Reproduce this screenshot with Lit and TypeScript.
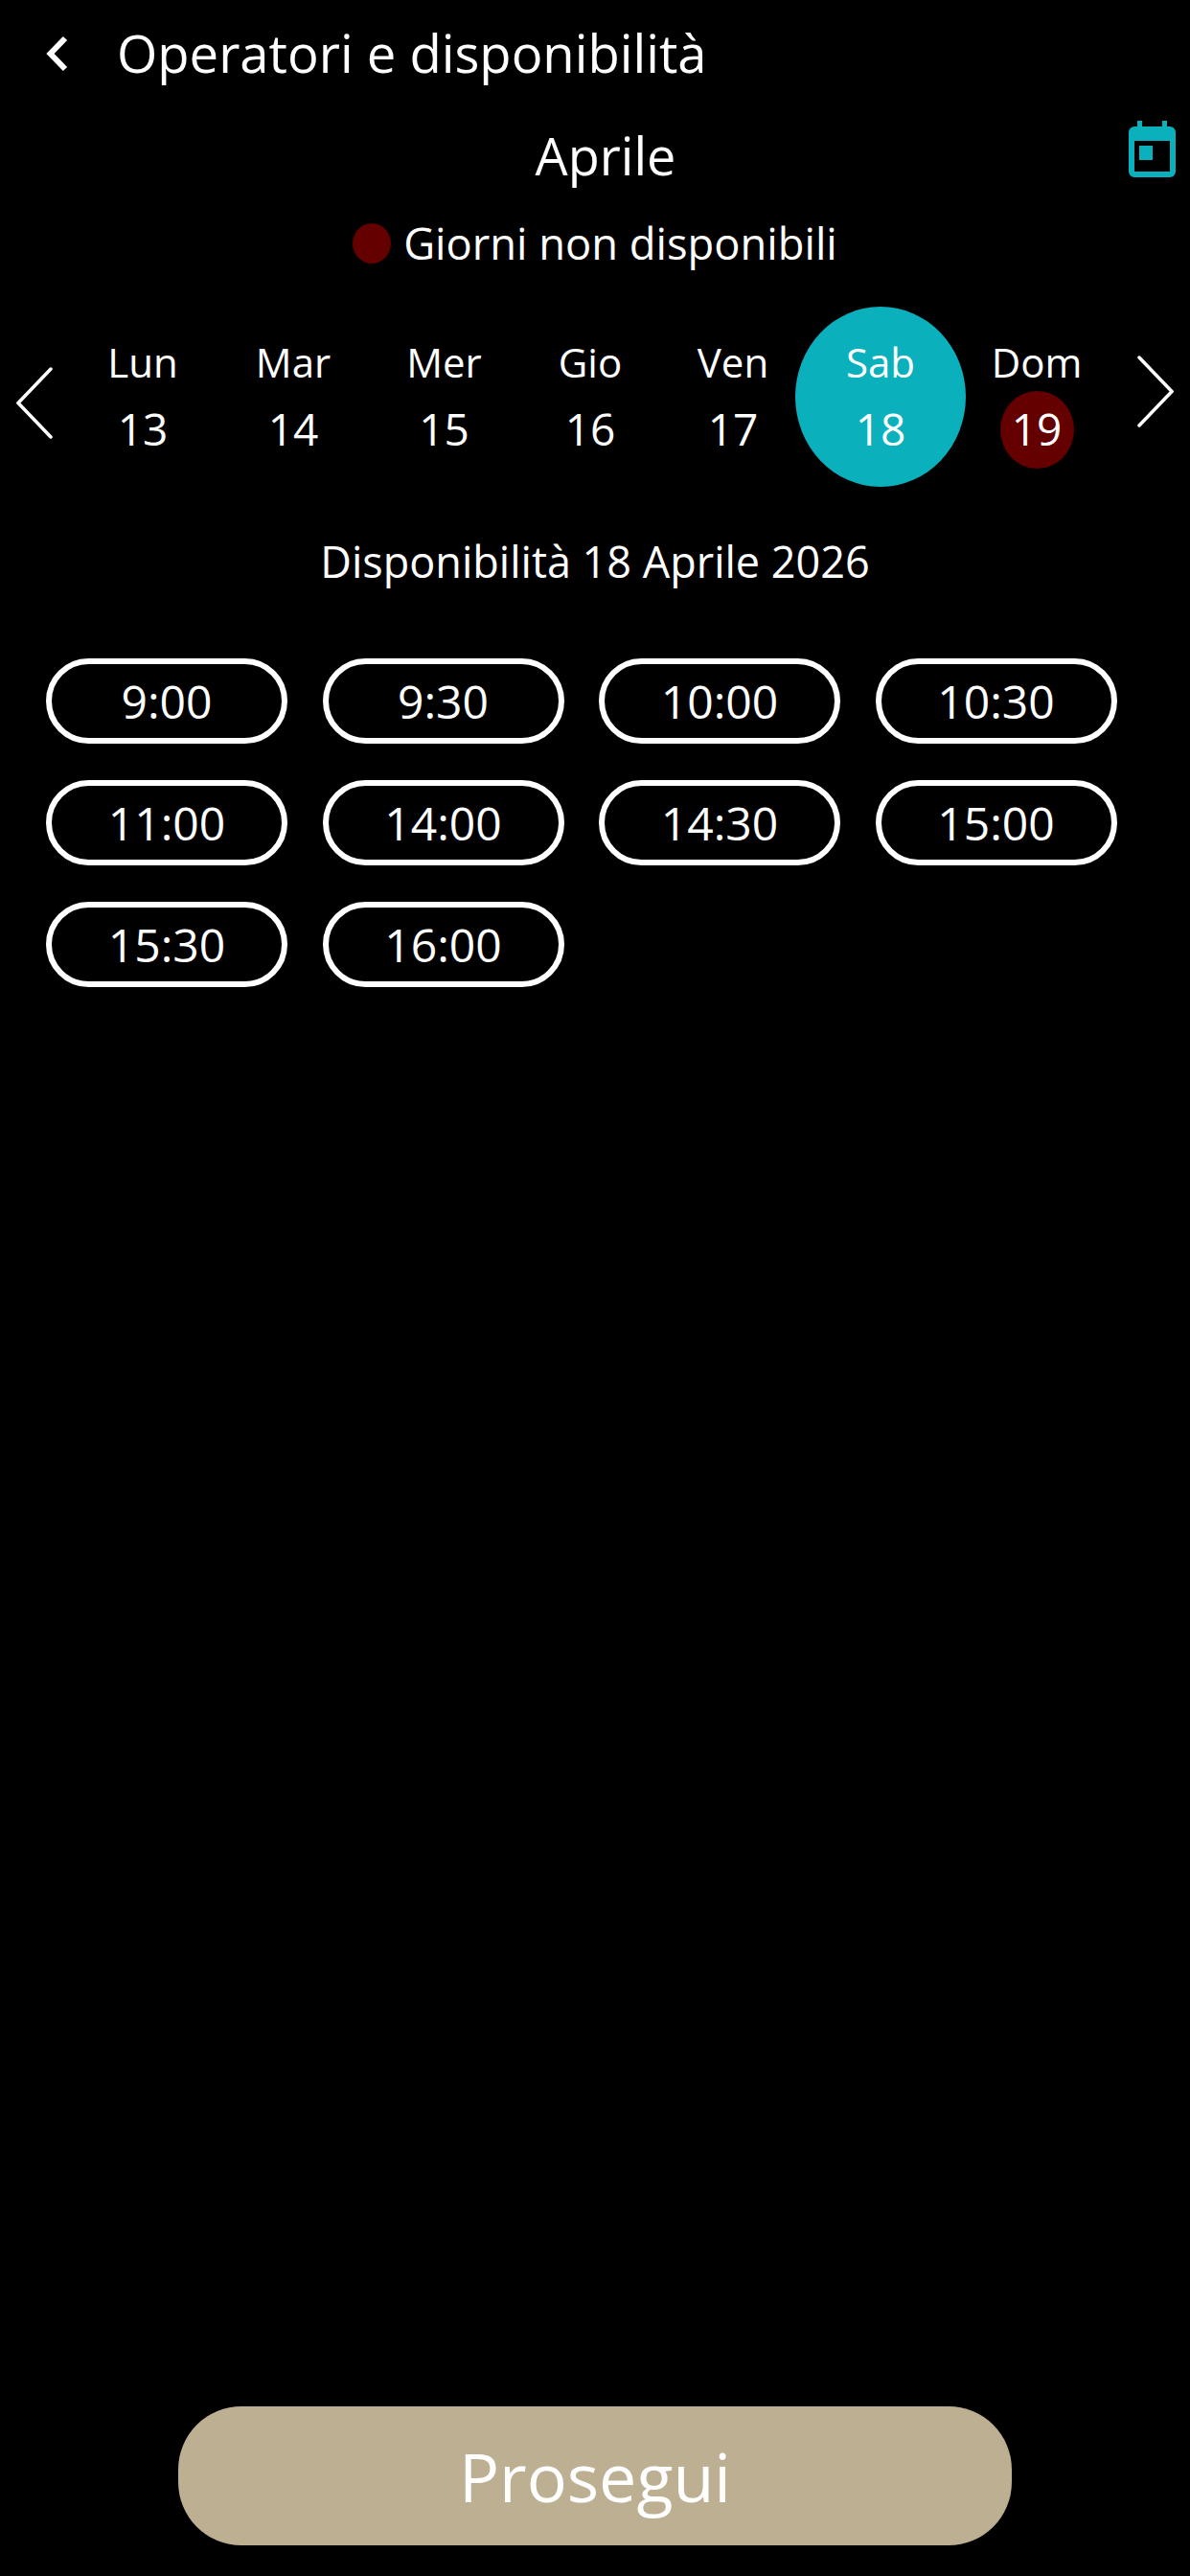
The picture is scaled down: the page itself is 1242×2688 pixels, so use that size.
import { LitElement, html, css } from "lit";
import { customElement } from "lit/decorators.js";

const DAYS = [
  { label: "Lun", num: "13" },
  { label: "Mar", num: "14" },
  { label: "Mer", num: "15" },
  { label: "Gio", num: "16" },
  { label: "Ven", num: "17" },
  { label: "Sab", num: "18", selected: true },
  { label: "Dom", num: "19", blocked: true },
];
const SLOTS = ["9:00", "9:30", "10:00", "10:30", "11:00", "14:00", "14:30", "15:00", "15:30", "16:00"];

@customElement("app-root")
export class AppRoot extends LitElement {
  static styles = css`
    :host {
      display: flex;
      flex-direction: column;
      height: 2688px;
      background: #000;
      color: #fff;
      font-family: "Open Sans", "Noto Sans", sans-serif;
      overflow: hidden;
    }
    .header {
      display: flex;
      align-items: center;
      gap: 51px;
      padding: 23px 0 0 48px;
      height: 64px;
    }
    .back { width: 23px; height: 38px; display: block; margin-top: 2px; }
    .title { font-size: 54.4px; line-height: 64px; }
    .month-row {
      display: flex;
      align-items: center;
      margin-top: 37px;
      height: 76px;
      padding-right: 15px;
    }
    .month {
      flex: 1;
      text-align: center;
      font-size: 54px;
      line-height: 76px;
      padding-left: 86px;
    }
    .cal { width: 49px; height: 59px; display: block; margin-top: -13px; }
    .legend {
      display: flex;
      justify-content: center;
      align-items: center;
      gap: 13px;
      margin-top: 18px;
      height: 70px;
      font-size: 45.3px;
    }
    .legend-dot { width: 40px; height: 42px; border-radius: 50%; background: #640000; margin-top: 2px; }
    .week {
      display: flex;
      align-items: center;
      margin-top: 32px;
      height: 188px;
      padding-left: 17px;
    }
    .arrow { width: 38px; height: 75px; display: block; flex: none; }
    .arrow.prev { transform: translateY(6px); }
    .arrow.next { transform: translateY(-6px); margin-left: 20px; }
    .days {
      display: grid;
      grid-template-columns: 158px 156px 159px 146px 152px 156px 170px;
      margin-left: 15px;
      height: 188px;
      align-items: center;
    }
    .day {
      display: flex;
      flex-direction: column;
      align-items: center;
      justify-self: center;
      height: 188px;
      width: 120px;
    }
    .day.selected { width: 178px; border-radius: 50%; background: #0ab1bd; }
    .label { font-size: 42px; line-height: 56px; margin-top: 30px; }
    .num {
      box-sizing: border-box;
      display: flex;
      align-items: center;
      justify-content: center;
      width: 77px;
      height: 81px;
      margin-top: 2px;
      padding-bottom: 3px;
      border-radius: 50%;
      font-size: 46px;
    }
    .num.blocked { background: #640000; }
    .avail {
      text-align: center;
      font-size: 45px;
      line-height: 64px;
      margin-top: 46px;
    }
    .slots {
      display: grid;
      grid-template-columns: repeat(4, 252px);
      column-gap: 36.5px;
      row-gap: 38px;
      padding-left: 48px;
      margin-top: 69px;
    }
    .slot {
      box-sizing: border-box;
      height: 89px;
      border: 6px solid #fff;
      border-radius: 45px;
      display: flex;
      align-items: center;
      justify-content: center;
      font-size: 48px;
    }
    .cta {
      align-self: center;
      width: 870px;
      height: 145px;
      margin: auto 0 32px;
      border-radius: 66px;
      background: #bcaf92;
      display: flex;
      align-items: center;
      justify-content: center;
      font-size: 70px;
    }
  `;

  render() {
    return html`
      <div class="header">
        <svg class="back" viewBox="0 0 23 38"><path d="M20 3 L4.500 19 L20 35" fill="none" stroke="#fff" stroke-width="6"/></svg>
        <div class="title">Operatori e disponibilità</div>
      </div>
      <div class="month-row">
        <div class="month">Aprile</div>
        <svg class="cal" viewBox="0 0 49 59">
          <path fill="#0ab1bd" fill-rule="evenodd" d="M9 0h5v6h21V0h5v6h3a6 6 0 0 1 6 6v41a6 6 0 0 1-6 6H6a6 6 0 0 1-6-6V12a6 6 0 0 1 6-6h3zM6 21v32h37V21z"/>
          <rect fill="#0ab1bd" x="11" y="26" width="14" height="15"/>
        </svg>
      </div>
      <div class="legend"><span class="legend-dot"></span><span>Giorni non disponibili</span></div>
      <div class="week">
        <svg class="arrow prev" viewBox="0 0 38 75"><path d="M36 2 L2 37.500 L36 73" fill="none" stroke="#fff" stroke-width="3.500" stroke-linecap="round"/></svg>
        <div class="days">
          ${DAYS.map(
            (d) => html`
              <div class="day ${d.selected ? "selected" : ""}">
                <div class="label">${d.label}</div>
                <div class="num ${d.blocked ? "blocked" : ""}">${d.num}</div>
              </div>
            `
          )}
        </div>
        <svg class="arrow next" viewBox="0 0 38 75"><path d="M2 2 L36 37.500 L2 73" fill="none" stroke="#fff" stroke-width="3.500" stroke-linecap="round"/></svg>
      </div>
      <div class="avail">Disponibilità 18 Aprile 2026</div>
      <div class="slots">${SLOTS.map((s) => html`<div class="slot">${s}</div>`)}</div>
      <div class="cta">Prosegui</div>
    `;
  }
}
